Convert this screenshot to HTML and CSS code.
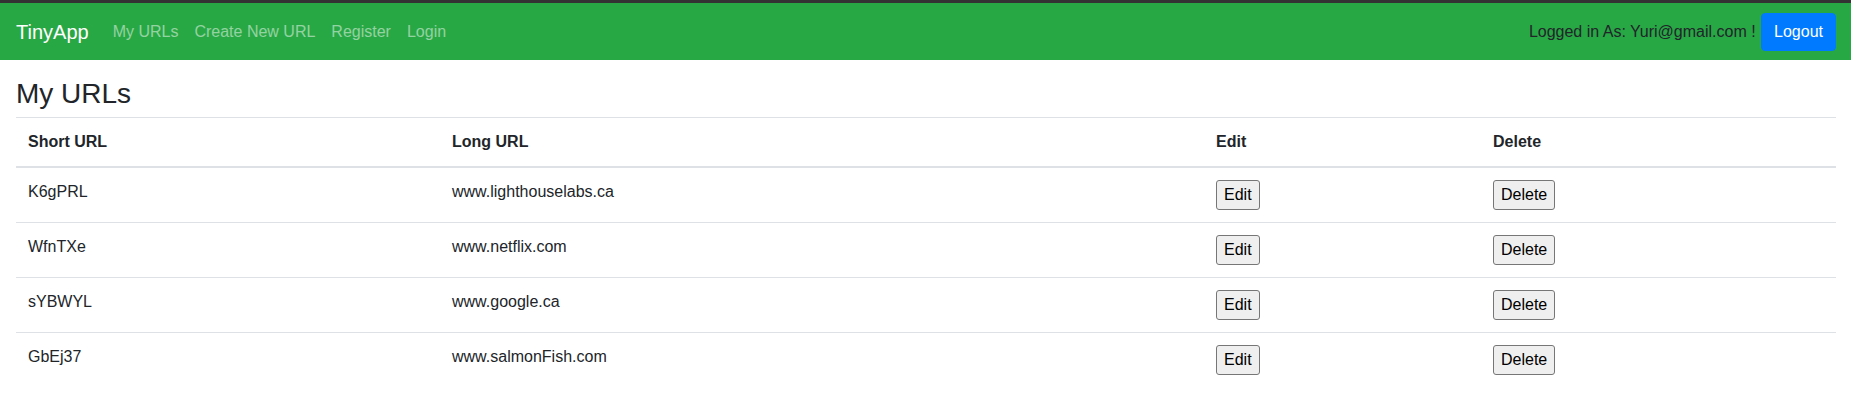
FILE: index.html
```html
<!DOCTYPE html>
<html lang="en">
<head>
<meta charset="utf-8">
<title>TinyApp</title>
<link rel="stylesheet" href="styles.css">
</head>
<body>
<nav class="navbar">
  <a class="brand" href="#">TinyApp</a>
  <ul class="nav">
    <li><a class="nav-link" href="#">My URLs</a></li>
    <li><a class="nav-link" href="#">Create New URL</a></li>
    <li><a class="nav-link" href="#">Register</a></li>
    <li><a class="nav-link" href="#">Login</a></li>
  </ul>
  <form class="user">
    <span class="user-text">Logged in As: Yuri@gmail.com ! </span>
    <button class="btn-logout" type="button">Logout</button>
  </form>
</nav>
<main class="container">
  <h3 class="title">My URLs</h3>
  <table class="table">
    <colgroup>
      <col class="c1"><col class="c2"><col class="c3"><col class="c4">
    </colgroup>
    <thead>
      <tr><th>Short URL</th><th>Long URL</th><th>Edit</th><th>Delete</th></tr>
    </thead>
    <tbody>
      <tr><td>K6gPRL</td><td>www.lighthouselabs.ca</td><td><button class="btn" type="button">Edit</button></td><td><button class="btn" type="button">Delete</button></td></tr>
      <tr><td>WfnTXe</td><td>www.netflix.com</td><td><button class="btn" type="button">Edit</button></td><td><button class="btn" type="button">Delete</button></td></tr>
      <tr><td>sYBWYL</td><td>www.google.ca</td><td><button class="btn" type="button">Edit</button></td><td><button class="btn" type="button">Delete</button></td></tr>
      <tr><td>GbEj37</td><td>www.salmonFish.com</td><td><button class="btn" type="button">Edit</button></td><td><button class="btn" type="button">Delete</button></td></tr>
    </tbody>
  </table>
</main>
</body>
</html>
```

FILE: styles.css
```css
* { box-sizing: border-box; }
html, body { margin: 0; padding: 0; }
body {
  font-family: "Liberation Sans", Arial, sans-serif;
  font-size: 16px;
  line-height: 1.5;
  color: #212529;
  background: #fff;
  border-top: 3px solid #333;
}
.navbar {
  display: flex;
  align-items: center;
  background: #28a745;
  padding: 9px 15px 8px 16px;
  height: 57px;
}
.brand {
  font-size: 20px;
  line-height: 30px;
  padding: 5px 0;
  margin-right: 16px;
  color: #fff;
  text-decoration: none;
  white-space: nowrap;
}
.nav {
  display: flex;
  list-style: none;
  margin: 0;
  padding: 0;
}
.nav-link {
  display: block;
  padding: 8px 8px;
  color: rgba(255,255,255,.5);
  text-decoration: none;
}
.user {
  margin: 0 0 0 auto;
  display: flex;
  align-items: center;
  white-space: pre;
}
.user-text { color: #212529; }
.btn-logout {
  font-family: inherit;
  font-size: 16px;
  line-height: 24px;
  padding: 6px 12px;
  color: #fff;
  background: #007bff;
  border: 1px solid #007bff;
  border-radius: 4px;
  margin-left: 1px;
}
.container { padding: 17px 15px 0 16px; }
.title {
  font-size: 28px;
  font-weight: 500;
  line-height: 1.2;
  margin: 0 0 6px 0;
}
.table {
  width: 100%;
  border-collapse: collapse;
  table-layout: fixed;
}
.c1 { width: 424px; }
.c2 { width: 764px; }
.c3 { width: 277px; }
.c4 { width: 355px; }
.table th, .table td {
  padding: 12px;
  text-align: left;
  vertical-align: top;
  border-top: 1px solid #dee2e6;
}
.table thead th {
  vertical-align: bottom;
  border-bottom: 2px solid #dee2e6;
  font-weight: bold;
}
.btn {
  font-family: inherit;
  font-size: 16px;
  line-height: 24px;
  padding: 2px 7px;
  margin: 0;
  color: #000;
  background: #efefef;
  border: 1px solid #767676;
  border-radius: 3px;
}
```
